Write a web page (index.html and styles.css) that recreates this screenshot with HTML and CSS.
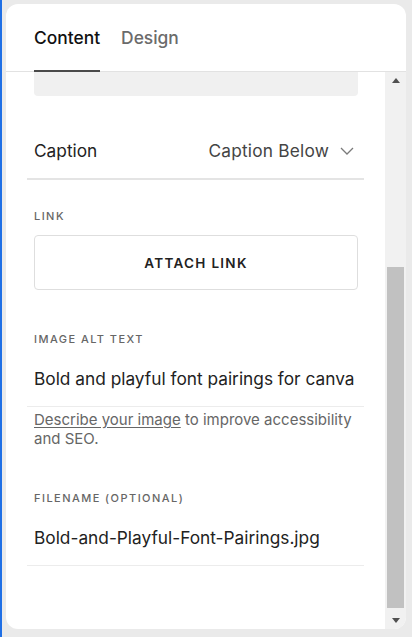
FILE: index.html
```html
<!DOCTYPE html>
<html>
<head>
<meta charset="utf-8">
<link rel="stylesheet" href="styles.css">
</head>
<body>
<div class="frame">
  <div class="edge"></div>
  <div class="panel">
    <div class="tabs">
      <div class="tab active">Content</div>
      <div class="tab">Design</div>
    </div>
    <div class="body">
      <div class="content">
        <div class="stub"></div>
        <div class="row caption-row">
          <span class="row-label">Caption</span>
          <span class="row-value">Caption Below
            <svg class="chev" width="14" height="8" viewBox="0 0 14 8"><path d="M1 1 L7 7 L13 1" fill="none" stroke="#7a7a7a" stroke-width="1.3"/></svg>
          </span>
        </div>
        <div class="field link-field">
          <div class="label">LINK</div>
          <div class="button">ATTACH LINK</div>
        </div>
        <div class="field alt-field">
          <div class="label">IMAGE ALT TEXT</div>
          <div class="input">Bold and playful font pairings for canva</div>
          <div class="help"><span class="u">Describe your image</span> to improve accessibility and SEO.</div>
        </div>
        <div class="field file-field">
          <div class="label">FILENAME (OPTIONAL)</div>
          <div class="input">Bold-and-Playful-Font-Pairings.jpg</div>
        </div>
      </div>
      <div class="scrollbar">
        <div class="arrow up"></div>
        <div class="track"><div class="thumb"></div></div>
        <div class="arrow down"></div>
      </div>
    </div>
  </div>
</div>
</body>
</html>
```
FILE: styles.css
```css
html, body {
  margin: 0;
  padding: 0;
  background: #eaeaea;
  font-family: Inter, "Noto Sans", sans-serif;
  color: #222;
}
.frame {
  display: flex;
  height: 637px;
}
.edge {
  width: 2px;
  background: #1f6fe5;
  flex: none;
}
.panel {
  margin: 4px 0 0 4px;
  width: 400px;
  height: 625px;
  background: #fff;
  border-radius: 12px;
  overflow: hidden;
  display: flex;
  flex-direction: column;
}
.tabs {
  display: flex;
  gap: 21px;
  padding: 0 28px;
  height: 67px;
  border-bottom: 1px solid #e2e2e2;
  flex: none;
}
.tab {
  font-size: 17.4px;
  font-weight: 500;
  color: #6b6b6b;
  padding-top: 22px;
  line-height: 24px;
  box-sizing: border-box;
  height: 67px;
}
.tab.active {
  color: #111;
  border-bottom: 2px solid #4a4a4a;
  height: 68px;
}
.body {
  flex: 1;
  display: flex;
  min-height: 0;
}
.content {
  flex: 1;
  padding: 0 21px;
}
.stub {
  margin: 0 6px 0 7px;
  height: 24px;
  background: #f0f0f0;
  border-radius: 0 0 4px 4px;
}
.row {
  display: flex;
  justify-content: space-between;
  align-items: center;
  margin-top: 43px;
  padding: 0 10px 15px 7px;
  line-height: 24px;
  border-bottom: 2px solid #e4e4e4;
  font-size: 17.3px;
}
.row-label { color: #222; }
.row-value {
  color: #444;
  display: flex;
  align-items: center;
  gap: 11px;
  letter-spacing: 0.2px;
}
.field {
  padding: 0 6px 0 7px;
}
.label {
  font-size: 11px;
  line-height: 16px;
  letter-spacing: 1.45px;
  font-weight: 500;
  color: #666;
}
.link-field { margin-top: 28px; }
.button {
  margin-top: 11px;
  height: 53px;
  border: 1px solid #dedede;
  border-radius: 4px;
  display: flex;
  align-items: center;
  justify-content: center;
  font-size: 13.5px;
  font-weight: 600;
  letter-spacing: 1.3px;
  color: #222;
}
.alt-field { margin-top: 41px; }
.file-field { margin-top: 42px; }
.input {
  margin: 20px -6px 0 -7px;
  padding: 0 6px 15px 7px;
  font-size: 17.3px;
  line-height: 24px;
  color: #222;
  border-bottom: 1px solid #ececec;
  white-space: nowrap;
  overflow: hidden;
}
.help {
  margin-top: 3px;
  font-size: 15px;
  line-height: 19px;
  color: #666;
}
.u { text-decoration: underline; text-underline-offset: 2px; }
.scrollbar {
  width: 21px;
  background: #f1f1f1;
  display: flex;
  flex-direction: column;
  flex: none;
}
.arrow {
  height: 17px;
  display: flex;
  align-items: center;
  justify-content: center;
  flex: none;
}
.arrow.up::before {
  content: "";
  border-left: 4px solid transparent;
  border-right: 4px solid transparent;
  border-bottom: 5px solid #505050;
}
.arrow.down::before {
  content: "";
  border-left: 4px solid transparent;
  border-right: 4px solid transparent;
  border-top: 5px solid #505050;
}
.track {
  flex: 1;
  display: flex;
  flex-direction: column;
  justify-content: flex-end;
  padding: 0 2px 0 2px;
  padding-bottom: 4px;
}
.thumb {
  height: 341px;
  background: #c1c1c1;
}
```
